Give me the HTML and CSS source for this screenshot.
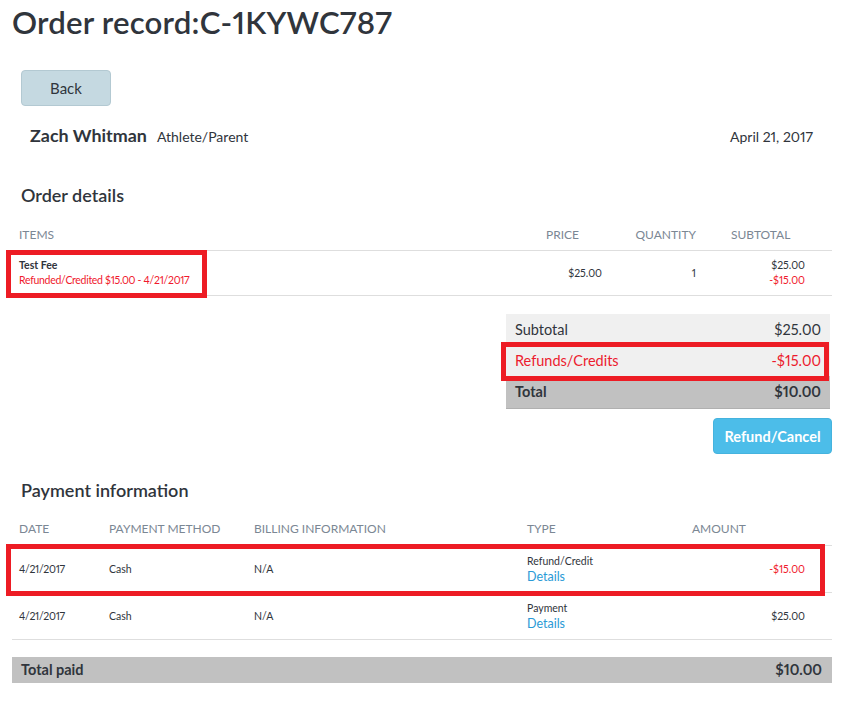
FILE: index.html
```html
<!DOCTYPE html>
<html lang="en">
<head>
  <meta charset="UTF-8">
  <title>Order record</title>
  <link rel="stylesheet" href="styles.css">
</head>
<body>
<div id="page">
  <h1 class="title">Order record:C-1KYWC787</h1>

  <div class="back-wrap">
    <button class="btn-back">Back</button>
  </div>

  <div class="person">
    <div><span class="name">Zach Whitman</span><span class="role">Athlete/Parent</span></div>
    <div class="date">April 21, 2017</div>
  </div>

  <h2 class="section">Order details</h2>

  <div class="order">
    <div class="row head">
      <div class="c-item">ITEMS</div>
      <div class="c-price">PRICE</div>
      <div class="c-qty">QUANTITY</div>
      <div class="c-sub">SUBTOTAL</div>
    </div>
    <div class="row item">
      <div class="c-item hl hl-item">
        <div class="strong">Test Fee</div>
        <div class="red tight">Refunded/Credited $15.00 - 4/21/2017</div>
      </div>
      <div class="c-price">$25.00</div>
      <div class="c-qty">1</div>
      <div class="c-sub">
        <div>$25.00</div>
        <div class="red">-$15.00</div>
      </div>
    </div>
  </div>

  <div class="summary">
    <div class="sum-row"><span>Subtotal</span><span>$25.00</span></div>
    <div class="sum-row refunds hl hl-sum"><span>Refunds/Credits</span><span>-$15.00</span></div>
    <div class="sum-row total"><span>Total</span><span>$10.00</span></div>
  </div>

  <div class="actions">
    <button class="btn-refund">Refund/Cancel</button>
  </div>

  <h2 class="section pay">Payment information</h2>

  <div class="payments">
    <div class="prow head">
      <div>DATE</div>
      <div>PAYMENT METHOD</div>
      <div>BILLING INFORMATION</div>
      <div>TYPE</div>
      <div>AMOUNT</div>
    </div>
    <div class="prow hl hl-pay">
      <div class="tight">4/21/2017</div>
      <div>Cash</div>
      <div>N/A</div>
      <div><div>Refund/Credit</div><a href="#" class="link">Details</a></div>
      <div class="amt red">-$15.00</div>
    </div>
    <div class="prow">
      <div class="tight">4/21/2017</div>
      <div>Cash</div>
      <div>N/A</div>
      <div><div>Payment</div><a href="#" class="link">Details</a></div>
      <div class="amt">$25.00</div>
    </div>
  </div>

  <div class="paid">
    <span>Total paid</span>
    <span>$10.00</span>
  </div>
</div>
</body>
</html>
```

FILE: styles.css
```css
body{
  margin: 0;
  color: #30353c;
  background: #fff;
  font-family: Lato, "Liberation Sans", sans-serif;
  font-variant-numeric: proportional-nums;
}
#page{
  width: 820px;
  padding: 0 12px;
}
.title{
  margin: 0;
  padding-top: 2px;
  height: 68px;
  line-height: 40px;
  font-size: 31.2px;
  font-weight: 600;
  letter-spacing: 0.2px;
}
.back-wrap{
  padding-left: 9px;
}
.btn-back{
  width: 90px;
  height: 36px;
  background: #c5d9e1;
  border: 1px solid #b3c9d2;
  border-radius: 4px;
  color: #30353c;
  font: 15px Lato, "Liberation Sans", sans-serif;
}
.person{
  display: flex;
  justify-content: space-between;
  align-items: baseline;
  padding: 18px 19px 0 18px;
  height: 34px;
}
.name{
  font-size: 17.9px;
  font-weight: 700;
  margin-right: 10px;
}
.role{
  font-size: 14px;
}
.date{
  font-size: 14px;
}
.section{
  margin: 0;
  padding: 27px 0 0 9px;
  height: 36px;
  line-height: 20px;
  font-size: 18px;
  font-weight: 600;
}

/* order table */
.row{
  display: grid;
  grid-template-columns: 527px 80px 84px 129px;
  border-bottom: 1px solid #dedede;
}
.head{
  height: 29px;
  color: #7b8794;
  font-size: 12px;
  line-height: 16px;
}
.row.head div{
  padding-top: 6px;
}
.item{
  height: 44px;
  font-size: 10.5px;
}
.item > div{
  display: flex;
  flex-direction: column;
  justify-content: center;
}
.c-item{
  padding-left: 7px;
}
.head .c-price{
  padding-left: 7px;
}
.item .c-price{
  text-align: right;
  padding-right: 17px;
}
.c-qty{
  text-align: right;
  padding-right: 7px;
}
.head .c-sub{
  padding-left: 28px;
}
.item .c-sub{
  text-align: right;
  padding-right: 27px;
}
.item .c-item div, .item .c-sub div{
  line-height: 15px;
}
.strong{
  font-weight: 700;
}
.red{
  color: #f0192d;
}
.tight{
  letter-spacing: -0.3px;
}

/* annotation boxes */
.hl{
  position: relative;
}
.hl::after{
  content: "";
  position: absolute;
  border: 5px solid #ed1c24;
}
.hl-item::after{
  left: -6px;
  top: -1px;
  width: 191px;
  height: 38px;
}
.hl-sum::after{
  left: -5px;
  right: 1px;
  top: -3px;
  bottom: -5px;
}
.hl-pay::after{
  left: -6px;
  right: 7px;
  top: -2px;
  bottom: -4px;
}

/* summary */
.summary{
  width: 324px;
  margin: 18px 2px 0 auto;
  font-size: 14.5px;
}
.sum-row{
  display: flex;
  justify-content: space-between;
  height: 31px;
  line-height: 31px;
  padding: 0 9px;
  background: #f0f0f0;
}
.sum-row.refunds{
  color: #ec1b2e;
}
.sum-row.total{
  height: 32px;
  background: #c1c1c1;
  font-weight: 700;
  border-bottom: 1px solid #b0b0b0;
}
.actions{
  display: flex;
  justify-content: flex-end;
  padding-top: 9px;
}
.btn-refund{
  width: 119px;
  height: 36px;
  background: #4cbde9;
  border: 1px solid #45b3de;
  border-radius: 4px;
  color: #fff;
  font: 700 14.5px Lato, "Liberation Sans", sans-serif;
}
.section.pay{
  padding-top: 26px;
}

/* payments */
.prow{
  display: grid;
  grid-template-columns: 90px 145px 273px 165px 147px;
  border-bottom: 1px solid #dedede;
  height: 46px;
  align-items: center;
  font-size: 10.5px;
}
.prow > div{
  padding-left: 7px;
  line-height: 15px;
}
.prow.head{
  height: 29px;
  align-items: start;
  font-size: 12px;
}
.prow.head > div{
  padding-top: 5px;
}
.prow .amt{
  text-align: right;
  padding-right: 27px;
}
.link{
  color: #2a9ad6;
  text-decoration: none;
  font-size: 12.5px;
}
.paid{
  display: flex;
  justify-content: space-between;
  margin-top: 17px;
  height: 26px;
  line-height: 26px;
  padding: 0 10px 0 9px;
  background: #c1c1c1;
  font-size: 14.5px;
  font-weight: 700;
}
```
